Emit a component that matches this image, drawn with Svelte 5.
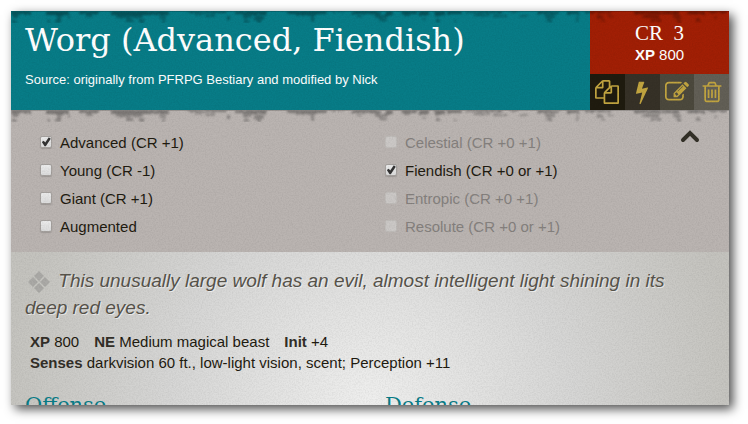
<script>
  const actions = [
    { label: 'Copy', tone: 'ink', path: 'M1696 384q40 0 68 28t28 68v1216q0 40-28 68t-68 28h-960q-40 0-68-28t-28-68v-288h-544q-40 0-68-28t-28-68v-672q0-40 20-88t48-76l408-408q28-28 76-48t88-20h416q40 0 68 28t28 68v328q68-40 128-40h416zm-544 213l-299 299h299v-299zm-640-384l-299 299h299v-299zm196 647l316-316v-416h-384v416q0 40-28 68t-68 28h-416v640h512v-256q0-40 20-88t48-76zm956 804v-1152h-384v416q0 40-28 68t-68 28h-416v640h896z' },
    { label: 'Quick action', tone: 'char', path: 'M1333 566q18 20 7 44l-540 1157q-13 25-42 25-4 0-14-2-17-5-25.5-19t-4.5-30l197-808-406 101q-4 1-12 1-18 0-31-11-18-15-13-39l201-825q4-14 16-23t28-9h328q19 0 32 12.5t13 29.5q0 8-5 18l-171 463 396-98q8-2 12-2 19 0 34 15z' },
    { label: 'Edit', tone: 'moss', path: 'M888 1184l116-116-152-152-116 116v56h96v96h56zm440-720q-16-16-33 1l-350 350q-17 17-1 33t33-1l350-350q17-17 1-33zm80 594v190q0 119-84.5 203.5t-203.5 84.5h-832q-119 0-203.5-84.5t-84.5-203.5v-832q0-119 84.5-203.5t203.5-84.5h832q63 0 117 25 15 7 18 23 3 17-9 29l-49 49q-14 14-32 8-23-6-45-6h-832q-66 0-113 47t-47 113v832q0 66 47 113t113 47h832q66 0 113-47t47-113v-126q0-13 9-22l64-64q15-15 35-7t20 29zm-96-738l288 288-672 672h-288v-288zm444 132l-92 92-288-288 92-92q28-28 68-28t68 28l152 152q28 28 28 68t-28 68z' },
    { label: 'Delete', tone: 'stone', path: 'M704 736v576q0 14-9 23t-23 9h-64q-14 0-23-9t-9-23v-576q0-14 9-23t23-9h64q14 0 23 9t9 23zm256 0v576q0 14-9 23t-23 9h-64q-14 0-23-9t-9-23v-576q0-14 9-23t23-9h64q14 0 23 9t9 23zm256 0v576q0 14-9 23t-23 9h-64q-14 0-23-9t-9-23v-576q0-14 9-23t23-9h64q14 0 23 9t9 23zm128 724v-948h-896v948q0 22 7 40.5t14.5 27 10.5 8.5h832q3 0 10.5-8.5t14.5-27 7-40.5zm-672-1076h448l-48-117q-7-9-17-11h-317q-10 2-17 11zm928 32v64q0 14-9 23t-23 9h-96v948q0 83-47 143.5t-113 60.5h-832q-66 0-113-58.5t-47-141.5v-952h-96q-14 0-23-9t-9-23v-64q0-14 9-23t23-9h309l70-167q15-37 54-63t79-26h320q40 0 79 26t54 63l70 167h309q14 0 23 9t9 23z' }
  ];

  let columns = $state([
    [
      { name: 'Advanced (CR +1)', on: true },
      { name: 'Young (CR -1)', on: false },
      { name: 'Giant (CR +1)', on: false },
      { name: 'Augmented', on: false }
    ],
    [
      { name: 'Celestial (CR +0 +1)', on: false, off: true },
      { name: 'Fiendish (CR +0 or +1)', on: true },
      { name: 'Entropic (CR +0 +1)', on: false, off: true },
      { name: 'Resolute (CR +0 or +1)', on: false, off: true }
    ]
  ]);

  // Blotches of the torn edge: x, y, width, height
  const blots = [
    [0,0,20,3],[2,3,6,4],[1,9,5,3],[36,0,22,4],[46,5,4,4],[36,9,3,3],[44,9,6,3],[57,5,2,3],[68,0,20,3],[74,3,8,3],
    [100,0,42,4],[104,4,28,3],[114,8,8,3],[128,8,5,4],[140,0,18,4],[149,5,5,3],[151,9,4,3],[176,0,40,2],[184,3,8,2],
    [194,4,10,2],[216,5,3,4],[224,0,16,3],[232,3,8,4],[233,9,6,3],
    [240,0,16,4],[243,5,10,4],[246,9,4,3],[276,0,40,3],[284,3,22,2],[300,5,3,6],[320,0,12,1],[340,0,30,3],[346,4,6,2],
    [364,4,12,3],[368,8,8,2],[374,0,8,5],[390,0,16,3],[393,3,6,2],[408,0,10,4],[411,7,4,2],[424,0,10,5],[426,8,3,3],
    [436,0,14,3],[443,9,3,2],[455,0,25,2],[464,3,14,2],
    [480,0,12,2],[482,4,14,2],[498,0,10,1],[508,4,8,2],[526,0,22,3],[534,4,10,3],[535,8,6,3],[556,0,12,3],[565,5,2,6],
    [574,0,26,2],[586,4,6,3],[590,8,4,3],[597,4,6,2],[623,0,45,3],[632,4,16,3],[640,8,10,3],[662,4,8,4],[666,9,4,3],
    [676,0,18,3],[685,8,4,3],[696,0,20,2],[704,5,2,3]
  ];
</script>

{#snippet edge()}
  <svg class="edge" width="720" height="14" viewBox="0 0 720 14" aria-hidden="true">
    <rect width="720" height="1" opacity="0.5" />
    <g filter="url(#ragged)">
      {#each blots as [x, y, w, h]}
        <rect {x} {y} width={w} height={h} opacity={y > 2 ? 0.75 : 1} />
      {/each}
    </g>
  </svg>
{/snippet}

<article class="card">
  <header>
    <div class="title">
      <h1>Worg (Advanced, Fiendish)</h1>
      <p>Source: originally from PFRPG Bestiary and modified by Nick</p>
    </div>
    <div class="side">
      <div class="rating">
        <span class="cr">CR&nbsp; 3</span>
        <span class="xp"><b>XP</b> 800</span>
      </div>
      <div class="actions">
        {#each actions as a}
          <button class={a.tone} type="button" aria-label={a.label}>
            <svg width="24" height="24" viewBox="0 0 1792 1792"><path d={a.path} /></svg>
          </button>
        {/each}
      </div>
    </div>
    {@render edge()}
  </header>

  <section class="templates">
    {#each columns as column}
      <div class="column">
        {#each column as t}
          <label class:off={t.off}>
            <input type="checkbox" bind:checked={t.on} disabled={t.off} />
            {t.name}
          </label>
        {/each}
      </div>
    {/each}
    <button class="collapse" type="button" aria-label="Collapse templates">
      <svg width="20" height="14" viewBox="0 0 20 14"><path d="M3 11l7-7 7 7" /></svg>
    </button>
    {@render edge()}
  </section>

  <section class="body">
    <p class="flavor">
      <svg width="22" height="22" viewBox="0 0 22 22" aria-hidden="true"><path d="M11 0l5 5-5 5-5-5zM11 12l5 5-5 5-5-5zM5 6l5 5-5 5-5-5zM17 6l5 5-5 5-5-5z" /></svg>
      This unusually large wolf has an evil, almost intelligent light shining in its deep red eyes.
    </p>
    <div class="stats">
      <div class="line">
        <span><b>XP</b> 800</span>
        <span><b>NE</b> Medium magical beast</span>
        <span><b>Init</b> +4</span>
      </div>
      <div><b>Senses</b> darkvision 60 ft., low-light vision, scent; Perception +11</div>
    </div>
    <div class="heads">
      <h2>Offense</h2>
      <h2>Defense</h2>
    </div>
  </section>

  <svg class="grain" width="100%" height="100%" aria-hidden="true">
    <filter id="paper" x="0" y="0" width="100%" height="100%">
      <feTurbulence type="fractalNoise" baseFrequency="0.7" numOctaves="2" seed="4" />
      <feColorMatrix type="matrix" values="0 0 0 0 0  0 0 0 0 0  0 0 0 0 0  0.5 0.5 0 0 -0.4" />
    </filter>
    <filter id="ragged" x="0" y="0" width="100%" height="100%">
      <feTurbulence type="fractalNoise" baseFrequency="0.3" numOctaves="2" seed="9" result="n" />
      <feDisplacementMap in="SourceGraphic" in2="n" scale="4" xChannelSelector="R" yChannelSelector="G" />
      <feGaussianBlur stdDeviation="0.8" />
    </filter>
    <rect width="100%" height="100%" filter="url(#paper)" />
  </svg>
</article>

<style>
  :global(body) {
    margin: 0;
    background: #fff;
    overflow: hidden;
  }
  .card {
    position: relative;
    box-sizing: border-box;
    height: calc(100vh - 30px);
    margin: 11px 19px 19px 11px;
    display: flex;
    flex-direction: column;
    font: 15px/21px "Liberation Sans", Arial, sans-serif;
    color: #1f1b10;
    background: #d4d3d0;
    box-shadow: 4px 4px 10px rgba(0, 0, 0, 0.7);
  }
  h1, h2, p {
    margin: 0;
    font-weight: 400;
  }
  button {
    border: 0;
    padding: 0;
    cursor: pointer;
  }
  header {
    position: relative;
    display: flex;
    flex: none;
    overflow: hidden;
    background: #087c87;
    color: #fff;
  }
  .title {
    flex: 1;
    padding: 9px 14px 20px;
  }
  h1 {
    font: 32px/40px "DejaVu Serif", serif;
    white-space: nowrap;
  }
  .title p {
    margin-top: 9px;
    font-size: 13px;
  }
  .side {
    width: 139px;
    display: flex;
    flex-direction: column;
  }
  .rating {
    flex: 1;
    display: flex;
    flex-direction: column;
    align-items: center;
    justify-content: center;
    padding-top: 2px;
    background: #a11f05;
  }
  .cr {
    font: 21px/22px "Liberation Serif", serif;
  }
  .actions {
    display: grid;
    grid-template-columns: repeat(4, 1fr);
    height: 36px;
  }
  .actions button {
    display: grid;
    place-items: center;
  }
  .actions svg {
    fill: #c2a540;
  }
  .ink { background: #1f1b0f; }
  .char { background: #363127; }
  .moss { background: #4c493d; }
  .stone { background: #625f56; }
  .edge {
    position: absolute;
    top: 0;
    left: 0;
    fill: #000;
    opacity: 0.34;
    pointer-events: none;
  }
  .templates {
    position: relative;
    flex: none;
    overflow: hidden;
    display: grid;
    grid-template-columns: 1fr 1fr;
    padding: 18px 14px 12px;
    background: #bab4b1;
  }
  .column {
    padding-left: 15px;
  }
  label {
    display: flex;
    align-items: center;
    gap: 8px;
    height: 28px;
  }
  label.off {
    color: #85817e;
  }
  input {
    appearance: none;
    box-sizing: border-box;
    width: 12px;
    height: 12px;
    margin: 0;
    border: 1px solid #a5a19e;
    border-radius: 2px;
    background: linear-gradient(#ebebeb, #dcdcdc);
    box-shadow: 0 1px 1px rgba(0, 0, 0, 0.15);
  }
  input:checked::after {
    content: "";
    display: block;
    width: 10px;
    height: 10px;
    background: #333;
    clip-path: polygon(8% 50%, 28% 38%, 42% 55%, 78% 2%, 98% 18%, 48% 92%, 36% 92%);
  }
  input:disabled {
    border-color: #bfbcb9;
    background: #cbc8c6;
    box-shadow: none;
  }
  .collapse {
    position: absolute;
    top: 19px;
    right: 29px;
    background: none;
  }
  .collapse svg {
    display: block;
    fill: none;
    stroke: #333027;
    stroke-width: 4;
    stroke-linecap: round;
  }
  .body {
    flex: 1;
    min-height: 0;
    overflow: hidden;
    padding: 15px 24px 0 14px;
    background: radial-gradient(circle at 50% 100%, #efefee 0, #d6d6d5 200px, #c4c3be 370px);
  }
  .flavor {
    font-size: 19px;
    line-height: 27px;
    font-style: italic;
    color: #57534b;
    text-shadow: 1px 1px 0 rgba(255, 255, 255, 0.6);
  }
  .flavor svg {
    margin: 0 3px;
    vertical-align: -6px;
    fill: #aaa9a6;
  }
  .stats {
    padding: 10px 5px 0;
  }
  .stats b {
    color: #332f28;
  }
  .line {
    display: flex;
    gap: 15px;
  }
  .heads {
    display: grid;
    grid-template-columns: 1fr 1fr;
    column-gap: 40px;
    margin-top: 16px;
  }
  h2 {
    font: 21px/32px "DejaVu Serif", serif;
    color: #087c87;
  }
  .grain {
    position: absolute;
    inset: 0;
    opacity: 0.16;
    pointer-events: none;
  }
</style>
